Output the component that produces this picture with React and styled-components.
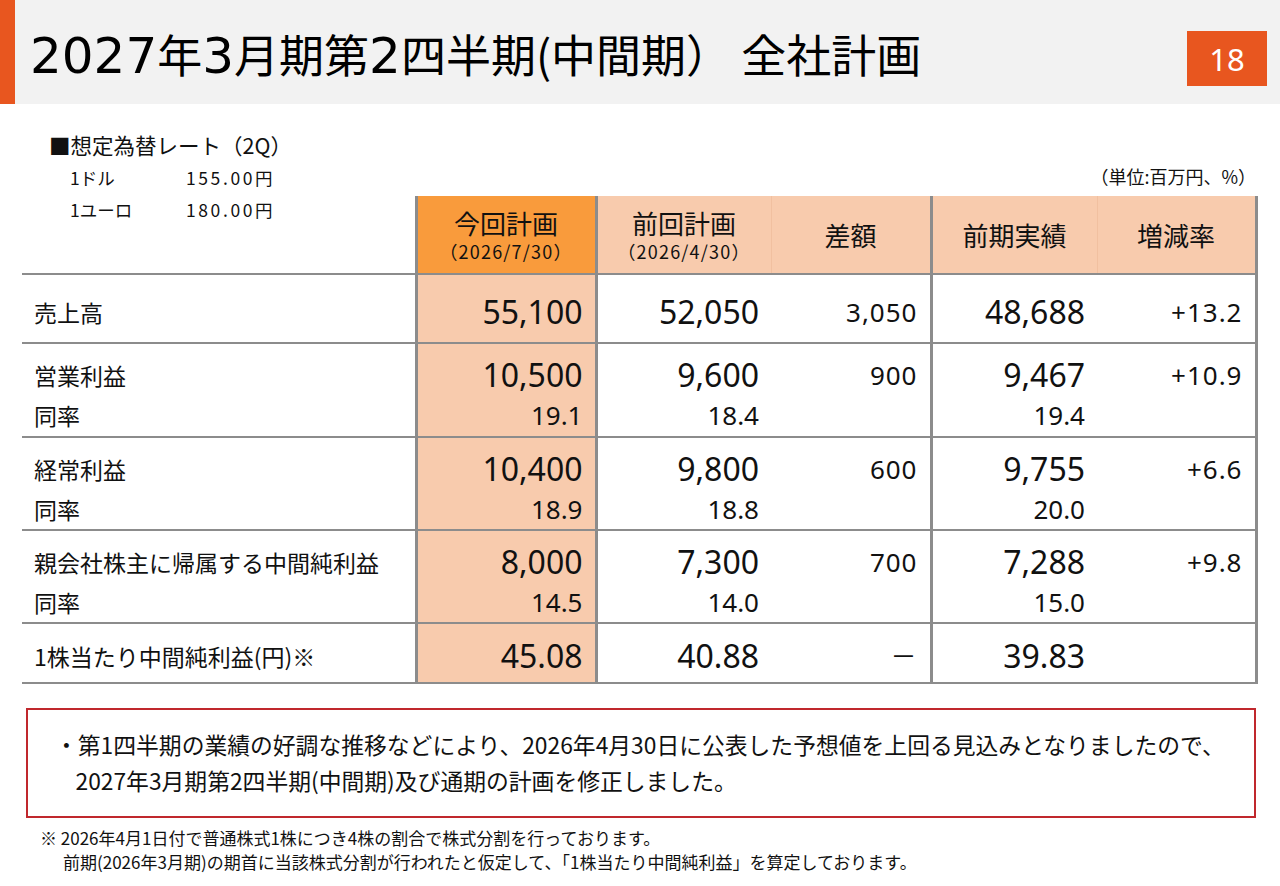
import React from "react";
import styled, { createGlobalStyle } from "styled-components";

const GlobalStyle = createGlobalStyle`
  body {
    margin: 0;
    background: #fff;
    color: #111;
    font-family: "Noto Sans CJK JP", "Noto Sans", sans-serif;
  }
`;

const rows = [
  { label: ["売上高"], pad: 16, h: 69, cur: ["55,100"], prev: ["52,050"], diff: "3,050", last: ["48,688"], rate: "+13.2" },
  { label: ["営業利益", "同率"], pad: 10, h: 94, cur: ["10,500", "19.1"], prev: ["9,600", "18.4"], diff: "900", last: ["9,467", "19.4"], rate: "+10.9" },
  { label: ["経常利益", "同率"], pad: 10, h: 93, cur: ["10,400", "18.9"], prev: ["9,800", "18.8"], diff: "600", last: ["9,755", "20.0"], rate: "+6.6" },
  { label: ["親会社株主に帰属する中間純利益", "同率"], pad: 10, h: 93, cur: ["8,000", "14.5"], prev: ["7,300", "14.0"], diff: "700", last: ["7,288", "15.0"], rate: "+9.8" },
  { label: ["1株当たり中間純利益(円)※"], pad: 11, h: 60, cur: ["45.08"], prev: ["40.88"], diff: "－", last: ["39.83"], rate: "" },
];

const App = () => {
  return (
    <>
      <GlobalStyle />
      <Page>
        <Header>
          <Title>
            <Fig>2027</Fig>年<Fig>3</Fig>月期第<Fig>2</Fig>四半期(中間期） 全社計画
          </Title>
          <PageNo>18</PageNo>
        </Header>
        <Body>
          <TopArea>
            <Rates>
              <RateTitle>■想定為替レート（2Q）</RateTitle>
              <RateRow>
                <span>1ドル</span>
                <RateValue>155.00円</RateValue>
              </RateRow>
              <RateRow>
                <span>1ユーロ</span>
                <RateValue>180.00円</RateValue>
              </RateRow>
            </Rates>
            <Unit>（単位:百万円、%）</Unit>
          </TopArea>
          <Table>
            <colgroup>
              <col style={{ width: 394 }} />
              <col style={{ width: 180 }} />
              <col style={{ width: 175 }} />
              <col style={{ width: 160 }} />
              <col style={{ width: 166 }} />
              <col style={{ width: 159 }} />
            </colgroup>
            <thead>
              <tr>
                <Th $edge />
                <Th $bg="#f99b3c" $edge>
                  <HeadMain>今回計画</HeadMain>
                  <HeadSub>（2026/7/30）</HeadSub>
                </Th>
                <Th $bg="#f8cbad" $soft>
                  <HeadMain>前回計画</HeadMain>
                  <HeadSub>（2026/4/30）</HeadSub>
                </Th>
                <Th $bg="#f8cbad" $edge>
                  <HeadMain>差額</HeadMain>
                </Th>
                <Th $bg="#f8cbad" $soft>
                  <HeadMain>前期実績</HeadMain>
                </Th>
                <Th $bg="#f8cbad" $edge>
                  <HeadMain>増減率</HeadMain>
                </Th>
              </tr>
            </thead>
            <tbody>
              {rows.map((r) => (
                <Tr key={r.label[0]} $h={r.h}>
                  <LabelCell $pad={r.pad} $edge>
                    {r.label.map((t, i) => (
                      <Line key={t} $sub={i > 0}>{t}</Line>
                    ))}
                  </LabelCell>
                  <Td $pad={r.pad} $bg="#f8cbad" $edge>
                    {r.cur.map((t, i) => (
                      <Num key={t} $kind={i > 0 ? "sub" : "big"}>{t}</Num>
                    ))}
                  </Td>
                  <Td $pad={r.pad}>
                    {r.prev.map((t, i) => (
                      <Num key={t} $kind={i > 0 ? "sub" : "big"}>{t}</Num>
                    ))}
                  </Td>
                  <Td $pad={r.pad} $edge>
                    <Num $kind="small">{r.diff}</Num>
                  </Td>
                  <Td $pad={r.pad}>
                    {r.last.map((t, i) => (
                      <Num key={t} $kind={i > 0 ? "sub" : "big"}>{t}</Num>
                    ))}
                  </Td>
                  <Td $pad={r.pad} $edge>
                    <Num $kind="small">{r.rate}</Num>
                  </Td>
                </Tr>
              ))}
            </tbody>
          </Table>
          <NoteBox>
            <p>
              ・第1四半期の業績の好調な推移などにより、2026年4月30日に公表した予想値を上回る見込みとなりましたので、
              <br />
              2027年3月期第2四半期(中間期)及び通期の計画を修正しました。
            </p>
          </NoteBox>
          <Footnote>
            <p>※ 2026年4月1日付で普通株式1株につき4株の割合で株式分割を行っております。</p>
            <p>前期(2026年3月期)の期首に当該株式分割が行われたと仮定して、「1株当たり中間純利益」を算定しております。</p>
          </Footnote>
        </Body>
      </Page>
    </>
  );
};

export default App;

const Page = styled.div`
  width: 1280px;
  height: 886px;
  overflow: hidden;
`;

const Header = styled.div`
  height: 104px;
  background: #f2f2f2;
  border-left: 15px solid #e8561f;
  box-sizing: border-box;
  display: flex;
  justify-content: space-between;
  align-items: flex-start;
  padding-left: 15px;
`;

const Title = styled.h1`
  margin: 26px 0 0;
  font-size: 45px;
  font-weight: 400;
  line-height: 56px;
  color: #000;
`;

const Fig = styled.span`
  font-family: "DejaVu Sans", sans-serif;
  font-size: 50px;
`;

const PageNo = styled.div`
  width: 80px;
  height: 55px;
  margin: 31px 13px 0 0;
  background: #e8561f;
  color: #fff;
  font-family: "Noto Sans", sans-serif;
  font-size: 31px;
  display: flex;
  align-items: center;
  justify-content: center;
`;

const Body = styled.div`
  padding: 0 24px 0 22px;
`;

const TopArea = styled.div`
  height: 92px;
  display: flex;
  justify-content: space-between;
  align-items: flex-end;
`;

const Rates = styled.div`
  align-self: flex-start;
  padding: 24px 0 0 27px;
  height: 0;
`;

const RateTitle = styled.div`
  font-size: 21.5px;
  line-height: 34px;
`;

const RateRow = styled.div`
  display: flex;
  font-size: 17.5px;
  line-height: 32px;
  padding-left: 21px;
  &:first-of-type {
    margin-top: 3px;
  }
  span:first-child {
    width: 116px;
  }
`;

const RateValue = styled.span`
  letter-spacing: 2.6px;
`;

const Unit = styled.div`
  font-size: 18px;
  line-height: 22px;
  margin: 0 0 9px 0;
`;

const Table = styled.table`
  border-collapse: collapse;
  table-layout: fixed;
  width: 1234px;
`;

const Th = styled.th`
  height: 77px;
  padding: 0;
  background: ${(p) => p.$bg || "transparent"};
  border-bottom: 2px solid #8c8c8c;
  border-right: ${(p) => (p.$edge ? "3px solid #8c8c8c" : p.$soft ? "1px solid #f1c0a0" : "none")};
  font-weight: 400;
  text-align: center;
  vertical-align: middle;
`;

const HeadMain = styled.div`
  font-size: 26px;
  line-height: 34px;
`;

const HeadSub = styled.div`
  font-size: 18px;
  line-height: 22px;
  letter-spacing: 1.2px;
  margin-bottom: 2px;
`;

const Tr = styled.tr`
  height: ${(p) => p.$h}px;
`;

const Td = styled.td`
  padding: ${(p) => p.$pad}px 12px 0 0;
  background: ${(p) => p.$bg || "transparent"};
  border-bottom: 2px solid #8c8c8c;
  border-right: ${(p) => (p.$edge ? "3px solid #8c8c8c" : "none")};
  text-align: right;
  vertical-align: top;
`;

const LabelCell = styled(Td)`
  padding-left: 12px;
  text-align: left;
`;

const Line = styled.div`
  font-size: 23px;
  line-height: ${(p) => (p.$sub ? "38px" : "42px")};
`;

const Num = styled.div`
  font-family: "Noto Sans", "Noto Sans CJK JP", sans-serif;
  font-size: ${(p) => (p.$kind === "big" ? "32px" : "26px")};
  line-height: ${(p) => (p.$kind === "sub" ? "38px" : "42px")};
  letter-spacing: ${(p) => (p.$kind === "small" ? "1px" : "0")};
`;

const NoteBox = styled.div`
  margin: 24px 0 0 4px;
  border: 2px solid #c0282d;
  padding: 17px 10px 17px 27px;
  p {
    margin: 0;
    font-size: 22.8px;
    line-height: 36px;
    white-space: nowrap;
    padding-left: 0.9em;
    text-indent: -0.9em;
  }
`;

const Footnote = styled.div`
  margin: 8px 0 0 18px;
  p {
    margin: 0;
    font-size: 17px;
    line-height: 24px;
  }
  p + p {
    padding-left: 23px;
  }
`;
